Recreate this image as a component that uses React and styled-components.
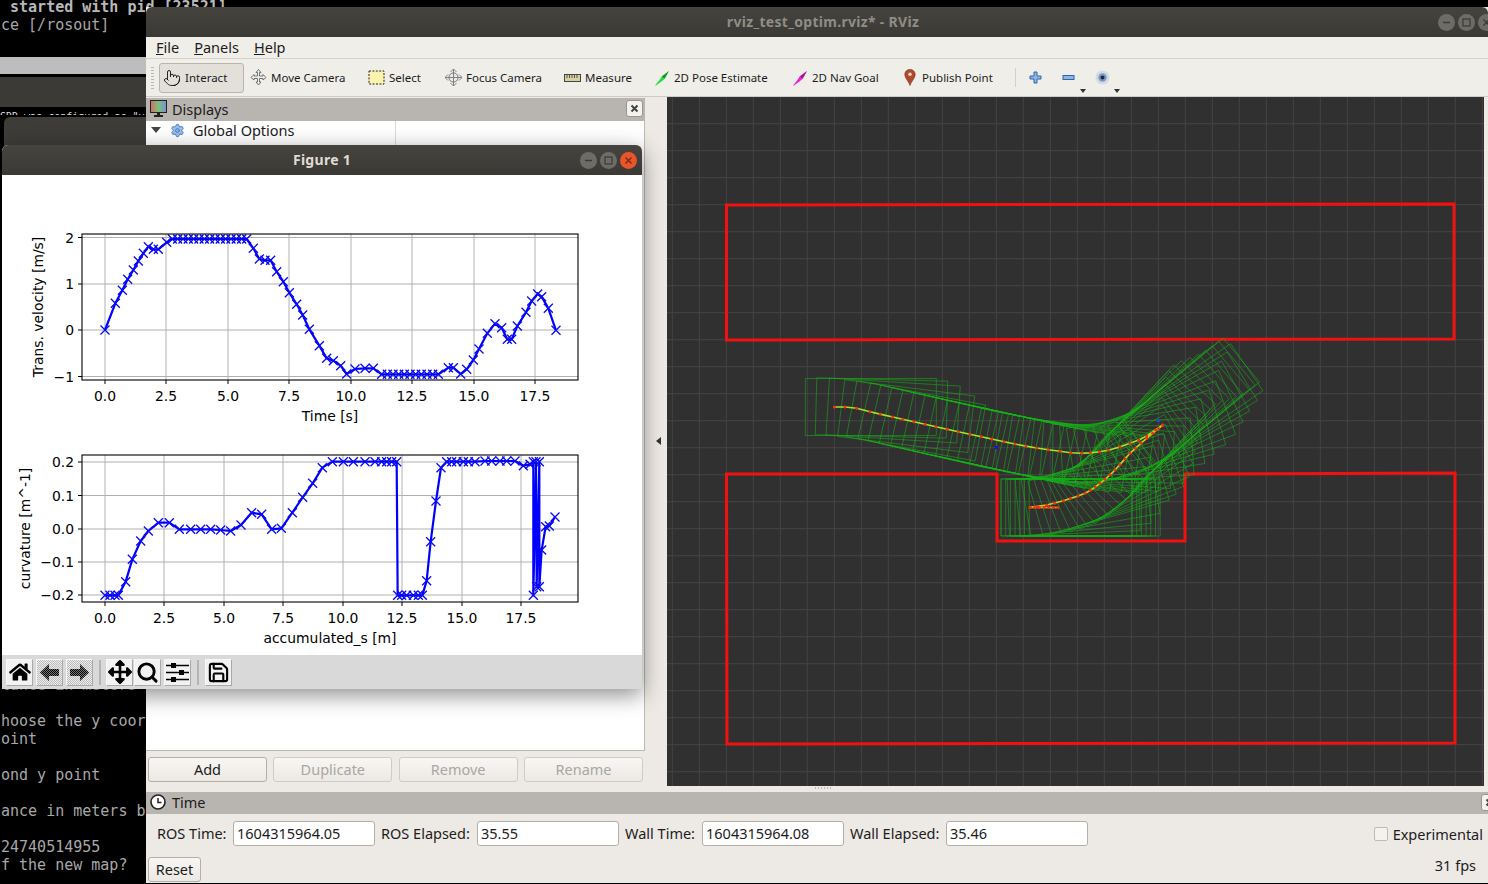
import React from 'react';
import styled, { createGlobalStyle } from 'styled-components';
import { Pointer, Settings, Search, Save } from 'lucide-react';
import { FaHome, FaArrowsAlt } from 'react-icons/fa';

const UI_FONT = '"Noto Sans", "Open Sans", sans-serif';
const PLOT_FONT = '"DejaVu Sans", sans-serif';

const GlobalStyle = createGlobalStyle`
  html, body { margin: 0; padding: 0; background: #000; }
  body { width: 1488px; height: 884px; overflow: hidden; font-family: ${UI_FONT}; }
  * { box-sizing: border-box; }
`;

const Desktop = styled.div`
  position: relative;
  width: 1488px;
  height: 884px;
  background: #000;
  overflow: hidden;
`;

/* terminal showing behind the windows */
const Terminal = styled.div`
  width: 146px;
  height: 884px;
  display: flex;
  flex-direction: column;
  font-family: "DejaVu Sans Mono", monospace;
  font-size: 15px;
  line-height: 18px;
  color: #a8a8a8;
  white-space: pre;
`;
const TermTop = styled.div`
  height: 59px;
  margin-top: -2px;
  padding-left: 1px;
  flex: none;
  b { color: #b8b8b8; }
`;
const TermTab = styled.div`
  height: 17px;
  flex: none;
  background: #bdbdbd;
`;
const TermTitle = styled.div`
  height: 30px;
  flex: none;
  margin-top: 3px;
  background: #3b3a36;
`;
const TermClip = styled.div`
  height: 4px;
  margin-top: 4px;
  flex: none;
  overflow: hidden;
  font-size: 10px;
  line-height: 12px;
  color: #ddd;
`;
const TermBottom = styled.div`
  margin-top: auto;
  height: 208px;
  padding-left: 1px;
  flex: none;
`;

const BackWindow = styled.div`
  position: absolute;
  left: 4px;
  top: 117px;
  width: 200px;
  height: 60px;
  background: #3d3c38;
  border-radius: 6px 6px 0 0;
`;

/* shared window chrome */
const TitleBar = styled.div`
  position: relative;
  flex: none;
  height: ${({ $h }) => $h}px;
  display: flex;
  align-items: center;
  justify-content: center;
  padding: 0 0 2px ${({ $shift }) => $shift || 0}px;
  background: linear-gradient(#45443f, #3a3935);
  color: ${({ $active }) => ($active ? '#e0dcd3' : '#8f8d85')};
  font-size: 14px;
  font-weight: 700;
  letter-spacing: 0.3px;
  border-radius: 6px 6px 0 0;
`;
const WinButtons = styled.div`
  position: absolute;
  top: 0;
  bottom: 0;
  right: ${({ $right }) => $right}px;
  display: flex;
  align-items: center;
  gap: ${({ $gap }) => $gap}px;
`;
const WinButton = styled.span`
  width: 17px;
  height: 17px;
  border-radius: 50%;
  background: ${({ $close }) => ($close ? '#e8542b' : '#6d6c66')};
  color: ${({ $close }) => ($close ? '#7a2a12' : '#3b3a36')};
  display: flex;
  align-items: center;
  justify-content: center;
`;

/* RViz window */
const RvizWindow = styled.div`
  position: absolute;
  left: 146px;
  top: 7px;
  right: 0;
  bottom: 1px;
  display: flex;
  flex-direction: column;
  background: #edeae5;
  color: #1c1c1c;
`;
const MenuBar = styled.div`
  flex: none;
  height: 22px;
  display: flex;
  align-items: center;
  gap: 15px;
  padding: 0 0 2px 10px;
  font-size: 14.5px;
  background: #f0eee9;
  border-bottom: 1px solid #d6d2cb;
`;
const ToolBar = styled.div`
  position: relative;
  flex: none;
  height: 38px;
  display: flex;
  align-items: center;
  padding-left: 13px;
  font-size: 11.5px;
  background: #f0eee9;
  border-bottom: 1px solid #cfcbc4;
`;
const Grip = styled.span`
  position: absolute;
  left: 5px;
  top: 8px;
  width: 3px;
  height: 22px;
  background: repeating-linear-gradient(#bcb8b1 0 1px, transparent 1px 3px);
`;
const Tool = styled.div`
  width: ${({ $w }) => $w}px;
  height: 30px;
  flex: none;
  display: flex;
  align-items: center;
  gap: ${({ $gap }) => $gap ?? 4}px;
  padding: 0 0 0 4px;
  white-space: nowrap;
`;
const ActiveTool = styled(Tool)`
  width: 85px;
  margin-right: 2px;
  background: #e3e0da;
  border: 1px solid #b9b5ae;
  border-radius: 3px;
  padding-left: 3px;
`;
const ToolSep = styled.span`
  width: 1px;
  height: 19px;
  flex: none;
  background: #d4d0c9;
  margin: 0 13px 0 4px;
`;
const SmallTool = styled.div`
  position: relative;
  width: 33px;
  height: 30px;
  flex: none;
  display: flex;
  align-items: center;
`;
const DropMark = styled.span`
  position: absolute;
  right: ${({ $r }) => $r}px;
  bottom: 0;
  border: 3px solid transparent;
  border-top: 4px solid #333;
  border-bottom: 0;
`;
const MainRow = styled.div`
  flex: 1;
  min-height: 0;
  display: flex;
`;
const Dock = styled.div`
  width: 499px;
  flex: none;
  display: flex;
  flex-direction: column;
`;
const PanelHeader = styled.div`
  position: relative;
  flex: none;
  height: ${({ $h }) => $h}px;
  margin-top: ${({ $mt }) => $mt || 0}px;
  display: flex;
  align-items: center;
  gap: ${({ $gap }) => $gap ?? 5}px;
  padding: 0 0 2px 4px;
  font-size: 14.5px;
  background: #b8b4af;
`;
const CloseBox = styled.span`
  position: absolute;
  right: ${({ $r }) => $r}px;
  top: 2px;
  width: 17px;
  height: 17px;
  display: flex;
  align-items: center;
  justify-content: center;
  background: #f4f2ef;
  border: 1px solid #99958f;
  border-radius: 3px;
  color: #444;
`;
const Tree = styled.div`
  flex: 1;
  background: #fff;
  border-right: 1px solid #bdb9b3;
  border-bottom: 1px solid #bdb9b3;
`;
const TreeRow = styled.div`
  height: 20px;
  display: grid;
  grid-template-columns: 250px 1fr;
  font-size: 14.5px;
  line-height: 18px;
`;
const TreeName = styled.div`
  display: flex;
  align-items: center;
  gap: 8px;
  padding: 0 0 2px ${({ $indent }) => $indent}px;
  border-right: 1px solid #dcdad6;
`;
const TreeValue = styled.div`
  padding-left: 4px;
`;
const Expander = styled.span`
  border: 5px solid transparent;
  border-top: 6px solid #444;
  border-bottom: 0;
  margin-right: 1px;
`;
const DockButtons = styled.div`
  flex: none;
  display: grid;
  grid-template-columns: repeat(4, 119px);
  justify-content: space-between;
  padding: 6px 2px 10px 2px;
`;
const PushButton = styled.div`
  height: 25px;
  width: ${({ $w }) => ($w ? `${$w}px` : 'auto')};
  display: flex;
  align-items: center;
  justify-content: center;
  padding-bottom: 2px;
  font-size: 14.5px;
  color: ${({ disabled }) => (disabled ? '#a9a7a2' : '#1c1c1c')};
  background: linear-gradient(#f7f6f4, #ecE9e4);
  border: 1px solid ${({ disabled }) => (disabled ? '#cfccc6' : '#b3afa8')};
  border-radius: 3px;
`;
const Splitter = styled.div`
  width: 22px;
  flex: none;
  display: flex;
  align-items: center;
  justify-content: center;
  padding-bottom: 8px;
`;
const LeftArrow = styled.span`
  border: 4px solid transparent;
  border-right: 5px solid #333;
  border-left: 0;
  margin-left: 5px;
`;
const RenderColumn = styled.div`
  width: 817px;
  flex: none;
  display: flex;
  flex-direction: column;
`;
const RenderView = styled.div`
  height: 689px;
  flex: none;
  background: #303030;
  svg { display: block; }
`;
const SplitDots = styled.span`
  width: 18px;
  height: 2px;
  margin: 1px 0 0 148px;
  background: repeating-linear-gradient(90deg, #bdb9b3 0 1px, transparent 1px 3px);
`;
const TimeRow = styled.div`
  flex: none;
  height: 43px;
  display: flex;
  align-items: flex-start;
  padding: 7px 5px 0 11px;
  font-size: 14.5px;
`;
const FieldLabel = styled.span`
  width: ${({ $w }) => $w}px;
  flex: none;
  line-height: 25px;
  white-space: nowrap;
`;
const Field = styled.div`
  width: 142px;
  height: 25px;
  flex: none;
  margin-right: 6px;
  padding-left: 3px;
  line-height: 23px;
  background: #fff;
  border: 1px solid #b3afa8;
  border-radius: 3px;
`;
const Experimental = styled.label`
  margin-left: auto;
  display: flex;
  align-items: center;
  gap: 5px;
  height: 25px;
`;
const CheckBox = styled.span`
  width: 14px;
  height: 14px;
  background: #f4f2ef;
  border: 1px solid #bdb9b3;
  border-radius: 2px;
`;
const StatusRow = styled.div`
  flex: none;
  height: 26px;
  display: flex;
  align-items: flex-start;
  justify-content: space-between;
  padding: 0 12px 0 2px;
  font-size: 14.5px;
`;
const Fps = styled.span`
  line-height: 16px;
`;

/* matplotlib figure window */
const FigureWindow = styled.div`
  position: absolute;
  left: 2px;
  top: 145px;
  width: 640px;
  height: 544px;
  display: flex;
  flex-direction: column;
  background: #fff;
  box-shadow: 0 6px 22px rgba(0, 0, 0, 0.45);
  border-radius: 6px 6px 0 0;
`;
const Canvas = styled.div`
  flex: none;
  height: 480px;
  svg { display: block; }
`;
const NavBar = styled.div`
  flex: 1;
  display: flex;
  align-items: center;
  padding-left: 4px;
  background: #d9d9d9;
`;
const NavButton = styled.div`
  width: 27px;
  height: 27px;
  flex: none;
  margin-right: ${({ $mr }) => $mr ?? 3}px;
  display: flex;
  align-items: center;
  justify-content: center;
  color: #000;
  background: ${({ $off }) =>
    $off ? 'repeating-conic-gradient(#bdbdbd 0 25%, #ececec 0 50%) 0 0 / 2px 2px' : '#f2f2f2'};
  border: 1px solid;
  border-color: #f8f8f8 #a9a9a9 #a9a9a9 #f8f8f8;
`;
const NavSep = styled.span`
  width: 2px;
  height: 25px;
  flex: none;
  background: #b5b5b5;
  margin: 0 ${({ $r }) => $r}px 0 6px;
`;

/* plot data, read off the reference at 3x (offset by crop origin) */
const flat = (from, to, step, y) => {
  const out = [];
  for (let x = from; x <= to; x += step) out.push([x, y]);
  return out;
};
const velocityRaw = [
  [75, 315], [106, 235], [127, 196], [143, 163], [160, 135], [175, 108], [190, 85], [205, 65], [220, 73], [235, 73], [260, 52],
  ...flat(277, 485, 16, 42), [500, 42],
  [520, 70], [538, 102], [555, 106], [572, 106], [590, 140], [610, 170], [628, 203], [650, 238], [668, 270], [688, 313],
  [718, 362], [740, 400], [760, 407], [782, 422], [800, 447], [825, 432], [855, 430], [880, 430],
  ...flat(905, 1075, 17, 448),
  [1105, 428], [1120, 428], [1142, 447], [1160, 433], [1180, 405], [1197, 372], [1222, 325], [1245, 296], [1265, 308],
  [1282, 343], [1295, 343], [1312, 303], [1338, 262], [1355, 228], [1373, 207], [1385, 215], [1405, 250], [1428, 316],
];
const curvatureRaw = [
  [75, 451], [90, 451], [105, 451], [115, 451], [137, 410], [157, 343], [182, 288], [205, 258], [235, 233], [268, 233],
  [298, 253], [332, 253], [362, 253], [392, 253], [422, 255], [452, 258], [483, 240], [515, 203], [545, 208], [575, 253],
  [604, 250], [637, 203], [668, 157], [698, 115], [727, 68], [757, 50], [790, 50], [820, 50], [855, 50], [885, 50], [905, 50],
  [920, 50], [935, 50], [950, 50], [953, 451], [965, 451], [980, 451], [1000, 451], [1015, 451], [1027, 451], [1040, 407],
  [1052, 290], [1068, 168], [1083, 68], [1100, 50], [1115, 50], [1130, 50], [1150, 50], [1165, 50], [1185, 50], [1215, 48],
  [1235, 48], [1260, 48], [1280, 48], [1305, 48], [1330, 62], [1350, 58], [1360, 50], [1360, 451], [1368, 50], [1370, 425],
  [1378, 50], [1378, 425], [1385, 315], [1397, 245], [1408, 243], [1425, 216],
];
const velocity = velocityRaw.map(([x, y]) => [x / 3 + 80, y / 3 + 225]);
const curvature = curvatureRaw.map(([x, y]) => [x / 3 + 80, y / 3 + 445]);

const GRID = '#b0b0b0';
const xLabels = ['0.0', '2.5', '5.0', '7.5', '10.0', '12.5', '15.0', '17.5'];

function Plot({ top, bottom, xTicks, yTicks, data, xTitle, yTitle, yTitleX }) {
  const left = 82;
  const right = 578;
  const mid = (top + bottom) / 2;
  return (
    <g fontFamily={PLOT_FONT} fontSize="13.9" fill="#000">
      {xTicks.map((x) => (
        <path key={x} d={`M${x} ${top}V${bottom}`} stroke={GRID} strokeWidth="1" />
      ))}
      {yTicks.map(([, y]) => (
        <path key={y} d={`M${left} ${y}H${right}`} stroke={GRID} strokeWidth="1" />
      ))}
      <polyline points={data.map((p) => p.join(',')).join(' ')} fill="none" stroke="#0000ff" strokeWidth="2.2" strokeLinejoin="round" />
      {data.map(([x, y], i) => (
        <path key={i} d={`M${x - 4.5} ${y - 4.5}l9 9M${x - 4.5} ${y + 4.5}l9 -9`} stroke="#0a0af0" strokeWidth="1.3" fill="none" />
      ))}
      <rect x={left} y={top} width={right - left} height={bottom - top} fill="none" stroke="#000" strokeWidth="1.1" />
      {xTicks.map((x, i) => (
        <g key={x}>
          <path d={`M${x} ${bottom}v4`} stroke="#000" strokeWidth="1" />
          <text x={x} y={bottom + 21} textAnchor="middle">{xLabels[i]}</text>
        </g>
      ))}
      {yTicks.map(([label, y]) => (
        <g key={label}>
          <path d={`M${left} ${y}h-4`} stroke="#000" strokeWidth="1" />
          <text x={74} y={y + 5} textAnchor="end">{label}</text>
        </g>
      ))}
      <text x="330" y={bottom + 41} textAnchor="middle">{xTitle}</text>
      <text x={yTitleX} y={mid} textAnchor="middle" transform={`rotate(-90 ${yTitleX} ${mid})`}>{yTitle}</text>
    </g>
  );
}

/* rviz scene: walls, planned path and robot footprints, in screen coordinates */
const fromCrop = ([x, y]) => [x / 3 + 780, y / 3 + 330];
const forwardPath = [
  [163, 231], [195, 231], [230, 235], [270, 245], [338, 261], [435, 283], [535, 305], [635, 327], [705, 342], [770, 354], [840, 364],
  [905, 370], [985, 361], [1050, 340], [1100, 318], [1148, 285],
].map(fromCrop);
const reversePath = [
  [1148, 285], [1100, 325], [1050, 370], [1005, 420], [960, 460], [915, 490], [850, 512], [800, 525], [750, 532],
].map(fromCrop);
const tailPoses = Array.from({ length: 7 }, (_, i) => [1030 + i * 4.7, 507.5]);

function resample(pts, spacing) {
  const out = [];
  for (let i = 0; i < pts.length - 1; i++) {
    const p0 = pts[Math.max(i - 1, 0)];
    const p1 = pts[i];
    const p2 = pts[i + 1];
    const p3 = pts[Math.min(i + 2, pts.length - 1)];
    const n = Math.max(1, Math.round(Math.hypot(p2[0] - p1[0], p2[1] - p1[1]) / spacing));
    for (let k = 0; k < n; k++) {
      const t = k / n;
      const f = (a, b, c, d) =>
        0.5 * (2 * b + (c - a) * t + (2 * a - 5 * b + 4 * c - d) * t * t + (3 * b - a - 3 * c + d) * t * t * t);
      out.push([f(p0[0], p1[0], p2[0], p3[0]), f(p0[1], p1[1], p2[1], p3[1])]);
    }
  }
  out.push(pts[pts.length - 1]);
  return out;
}

function footprint(p, th) {
  const c = Math.cos(th);
  const s = Math.sin(th);
  const corner = (u, v) => `${(p[0] + u * c - v * s).toFixed(1)},${(p[1] + u * s + v * c).toFixed(1)}`;
  return [corner(-29, -28.5), corner(102, -28.5), corner(102, 28.5), corner(-29, 28.5)].join(' ');
}

function footprints(path, reversed) {
  const n = path.length;
  return path.map((p, i) => {
    const a = path[Math.max(i - 2, 0)];
    const b = path[Math.min(i + 2, n - 1)];
    // the robot backs down the second leg, so its nose points against the travel
    const th = reversed ? Math.atan2(a[1] - b[1], a[0] - b[0]) : Math.atan2(b[1] - a[1], b[0] - a[0]);
    // both ends of the trip sit flat: the start pose and the parking box
    const flatten = reversed ? Math.max(0, (i - (n - 5)) / 4) : Math.max(0, (5 - i) / 5);
    return footprint(p, th * (1 - flatten));
  });
}

const forwardPoses = resample(forwardPath, 10);
const reversePoses = resample(reversePath, 7);
const footprintPolys = [
  ...footprints(forwardPoses, false),
  ...footprints(reversePoses, true),
  ...tailPoses.map((p) => footprint(p, 0)),
];
const gridX = Array.from({ length: 31 }, (_, i) => 672.3 + i * 27);
const gridY = Array.from({ length: 26 }, (_, i) => 96.7 + i * 27);

function Scene() {
  const line = (pts) => pts.map((p) => p.map((v) => v.toFixed(1)).join(',')).join(' ');
  return (
    <svg width="817" height="689" viewBox="667 97 817 689">
      {gridX.map((x) => (
        <path key={x} d={`M${x} 97V786`} stroke="#444" strokeWidth="1" />
      ))}
      {gridY.map((y) => (
        <path key={y} d={`M667 ${y}H1484`} stroke="#444" strokeWidth="1" />
      ))}
      <g fill="none" stroke="#f21010" strokeWidth="3">
        <path d="M726.5 205L1454 204V339L726.5 340Z" />
        <path d="M726.5 474H997V541H1185V474L1455 473V743L727 744Z" />
      </g>
      <g fill="none" stroke="#18b018" strokeWidth="1" strokeOpacity="0.55">
        {footprintPolys.map((pts, i) => (
          <polygon key={i} points={pts} />
        ))}
      </g>
      <polyline points={line(forwardPoses)} fill="none" stroke="#a4e41e" strokeWidth="1.6" />
      <polyline points={line(reversePoses)} fill="none" stroke="#d4c81e" strokeWidth="1.6" />
      <path d="M1030 507.5H1058" stroke="#e8a020" strokeWidth="1.6" />
      {[...forwardPoses, ...reversePoses, ...tailPoses].map((p, i) => (
        <circle key={i} cx={p[0]} cy={p[1]} r="1.5" fill="#f03010" />
      ))}
      <rect x="995" y="446" width="3" height="3" fill="#1414e0" />
      <rect x="1157" y="419" width="3" height="3" fill="#1450c0" />
    </svg>
  );
}

/* window and dock glyphs */
const GlyphMin = () => (
  <svg width="9" height="9" viewBox="0 0 9 9"><path d="M1 4.5h7" stroke="#3b3a36" strokeWidth="1.4" /></svg>
);
const GlyphMax = () => (
  <svg width="9" height="9" viewBox="0 0 9 9"><rect x="1" y="1" width="7" height="7" fill="none" stroke="#3b3a36" strokeWidth="1.2" /></svg>
);
const GlyphClose = () => (
  <svg width="9" height="9" viewBox="0 0 9 9"><path d="M1.5 1.5l6 6M7.5 1.5l-6 6" stroke="currentColor" strokeWidth="1.4" /></svg>
);
const DockClose = () => (
  <svg width="9" height="9" viewBox="0 0 9 9"><path d="M1.5 1.5l6 6M7.5 1.5l-6 6" stroke="currentColor" strokeWidth="2" /></svg>
);
const ClockIcon = () => (
  <svg width="16" height="16" viewBox="0 0 16 16">
    <circle cx="8" cy="8" r="7" fill="#fff" stroke="#222" strokeWidth="1.6" />
    <path d="M8 4v4.5h3.5" fill="none" stroke="#222" strokeWidth="1.5" />
  </svg>
);

/* toolbar icons */
const MoveCameraIcon = () => (
  <svg width="17" height="17" viewBox="0 0 17 17" fill="#eee" stroke="#555" strokeWidth="0.8">
    <path d="M8.5 .5l2.5 3h-1.5v3.5h3.5v-1.5l3 3-3 2.5v-1.5h-3.5v3.5h1.5l-2.5 3-2.5-3h1.5v-3.5h-3.5v1.5l-3-2.5 3-3v1.5h3.5v-3.5h-1.5z" />
  </svg>
);
const SelectIcon = () => (
  <svg width="17" height="15" viewBox="0 0 17 15">
    <rect x="1" y="1" width="15" height="13" fill="#fbf3ad" stroke="#222" strokeDasharray="2 1.4" />
  </svg>
);
const FocusIcon = () => (
  <svg width="17" height="17" viewBox="0 0 17 17" fill="none" stroke="#777">
    <circle cx="8.5" cy="8.5" r="4.6" fill="#e8e8e8" />
    <path d="M8.5 0v17M0 8.5h17M5.5 3l3-3 3 3M5.5 14l3 3 3-3M3 5.5l-3 3 3 3M14 5.5l3 3-3 3" strokeWidth="0.9" />
  </svg>
);
const RulerIcon = () => (
  <svg width="17" height="8" viewBox="0 0 17 8">
    <rect x=".5" y=".5" width="16" height="7" fill="#d9cf9f" stroke="#444" />
    <path d="M3 1v3M5.5 1v3M8 1v3M10.5 1v3M13 1v3" stroke="#555" />
  </svg>
);
const ArrowIcon = ({ color }) => (
  <svg width="16" height="16" viewBox="0 0 16 16">
    <path d="M1 15.5L5.5 10 8 6 15 1 11 8.5 7.5 11.5 2 15.5Z" fill={color} />
    <path d="M15 1L10.5 8.5 8 6.5Z" fill="#222" opacity="0.45" />
  </svg>
);
const PinIcon = () => (
  <svg width="12" height="17" viewBox="0 0 12 17">
    <path d="M6 .5C2.8.5.8 2.8.8 5.6c0 3.6 3.8 6.6 5.2 10.9C7.4 12.2 11.2 9.2 11.2 5.6 11.2 2.8 9.2.5 6 .5Z" fill="#b0492a" stroke="#7a3018" strokeWidth="0.6" />
    <circle cx="6" cy="5.2" r="1.8" fill="#f0d8c8" />
  </svg>
);
const PlusIcon = () => (
  <svg width="13" height="13" viewBox="0 0 13 13">
    <path d="M5 1h3v4h4v3h-4v4h-3v-4h-4v-3h4z" fill="#8fb6e0" stroke="#2f66a8" />
  </svg>
);
const MinusIcon = () => (
  <svg width="13" height="13" viewBox="0 0 13 13">
    <rect x="1" y="4.5" width="11" height="4" fill="#8fb6e0" stroke="#2f66a8" />
  </svg>
);
const EyeIcon = () => (
  <svg width="15" height="15" viewBox="0 0 15 15">
    <circle cx="7.5" cy="7.5" r="7" fill="#d4dae2" />
    <circle cx="7.5" cy="7.5" r="4.2" fill="#7d9ac4" />
    <circle cx="7.5" cy="7.5" r="2" fill="#1a2a48" />
  </svg>
);
const MonitorIcon = () => (
  <svg width="17" height="18" viewBox="0 0 17 18">
    <defs>
      <linearGradient id="screen" x1="0" x2="1">
        <stop offset="0" stopColor="#d86a6a" />
        <stop offset="0.5" stopColor="#7ac27a" />
        <stop offset="1" stopColor="#7a8ed8" />
      </linearGradient>
    </defs>
    <rect x=".5" y=".5" width="16" height="12" fill="url(#screen)" stroke="#222" />
    <path d="M7 13h3v2h3v2H4v-2h3z" fill="#222" />
  </svg>
);

/* matplotlib toolbar icons */
const Dither = ({ id }) => (
  <pattern id={id} width="2" height="2" patternUnits="userSpaceOnUse">
    <rect width="2" height="2" fill="#777" />
    <rect width="1" height="1" fill="#000" />
    <rect x="1" y="1" width="1" height="1" fill="#000" />
  </pattern>
);
const BackIcon = () => (
  <svg width="21" height="19" viewBox="0 0 21 19">
    <defs><Dither id="ditherL" /></defs>
    <path d="M1 9.5L10 1v5h10v7H10v5z" fill="url(#ditherL)" />
  </svg>
);
const ForwardIcon = () => (
  <svg width="21" height="19" viewBox="0 0 21 19">
    <defs><Dither id="ditherR" /></defs>
    <path d="M20 9.5L11 1v5H1v7h10v5z" fill="url(#ditherR)" />
  </svg>
);
const SlidersIcon = () => (
  <svg width="23" height="21" viewBox="0 0 23 21" stroke="#000" fill="#000">
    <path d="M0 3.5h23M0 10.5h23M0 17.5h23" strokeWidth="1.6" />
    <rect x="5" y="1" width="5" height="5" stroke="none" />
    <rect x="13" y="8" width="5" height="5" stroke="none" />
    <rect x="5" y="15" width="5" height="5" stroke="none" />
  </svg>
);

const tools = [
  { label: 'Move Camera', w: 118, icon: <MoveCameraIcon /> },
  { label: 'Select', w: 77, icon: <SelectIcon /> },
  { label: 'Focus Camera', w: 119, icon: <FocusIcon /> },
  { label: 'Measure', w: 90, icon: <RulerIcon /> },
  { label: '2D Pose Estimate', w: 138, icon: <ArrowIcon color="#22e03a" /> },
  { label: '2D Nav Goal', w: 112, icon: <ArrowIcon color="#f020d8" /> },
  { label: 'Publish Point', w: 111, gap: 6, icon: <PinIcon /> },
];

const timeFields = [
  { label: 'ROS Time:', w: 76, value: '1604315964.05' },
  { label: 'ROS Elapsed:', w: 96, value: '35.55' },
  { label: 'Wall Time:', w: 77, value: '1604315964.08' },
  { label: 'Wall Elapsed:', w: 96, value: '35.46' },
];

export default function App() {
  return (
    <Desktop>
      <GlobalStyle />
      <Terminal>
        <TermTop>
          <b>{' started with pid [23521]'}</b>
          {'\nce [/rosout]'}
        </TermTop>
        <TermTab />
        <TermTitle />
        <TermClip>{'SDD was configured as "v4l2"'}</TermClip>
        <TermBottom>
          {'tance in meters\n\nhoose the y coor\noint\n\nond y point\n\nance in meters b\n\n24740514955\nf the new map?'}
        </TermBottom>
      </Terminal>
      <BackWindow />

      <RvizWindow>
        <TitleBar $h={30} $shift={12}>
          rviz_test_optim.rviz* - RViz
          <WinButtons $right={-7} $gap={3}>
            <WinButton><GlyphMin /></WinButton>
            <WinButton><GlyphMax /></WinButton>
            <WinButton><GlyphClose /></WinButton>
          </WinButtons>
        </TitleBar>
        <MenuBar>
          <span><u>F</u>ile</span>
          <span><u>P</u>anels</span>
          <span><u>H</u>elp</span>
        </MenuBar>
        <ToolBar>
          <Grip />
          <ActiveTool>
            <Pointer size={18} strokeWidth={1.2} color="#111" />
            Interact
          </ActiveTool>
          {tools.map((t) => (
            <Tool key={t.label} $w={t.w} $gap={t.gap}>
              {t.icon}
              {t.label}
            </Tool>
          ))}
          <ToolSep />
          <SmallTool><PlusIcon /></SmallTool>
          <SmallTool><MinusIcon /><DropMark $r={9} /></SmallTool>
          <SmallTool><EyeIcon /><DropMark $r={8} /></SmallTool>
        </ToolBar>
        <MainRow>
          <Dock>
            <PanelHeader $h={23} $mt={1}>
              <MonitorIcon />
              Displays
              <CloseBox $r={2}><DockClose /></CloseBox>
            </PanelHeader>
            <Tree>
              <TreeRow>
                <TreeName $indent={5}>
                  <Expander />
                  <Settings size={15} color="#3b74c4" fill="#9fc0ea" strokeWidth={1.5} />
                  Global Options
                </TreeName>
                <TreeValue />
              </TreeRow>
              <TreeRow>
                <TreeName $indent={46}>Fixed Frame</TreeName>
                <TreeValue>odom</TreeValue>
              </TreeRow>
            </Tree>
            <DockButtons>
              <PushButton>Add</PushButton>
              <PushButton disabled>Duplicate</PushButton>
              <PushButton disabled>Remove</PushButton>
              <PushButton disabled>Rename</PushButton>
            </DockButtons>
          </Dock>
          <Splitter><LeftArrow /></Splitter>
          <RenderColumn>
            <RenderView><Scene /></RenderView>
            <SplitDots />
          </RenderColumn>
        </MainRow>
        <PanelHeader $h={22} $gap={6}>
          <ClockIcon />
          <span>Time</span>
          <CloseBox $r={-10}><DockClose /></CloseBox>
        </PanelHeader>
        <TimeRow>
          {timeFields.map((f) => (
            <React.Fragment key={f.label}>
              <FieldLabel $w={f.w}>{f.label}</FieldLabel>
              <Field>{f.value}</Field>
            </React.Fragment>
          ))}
          <Experimental>
            <CheckBox />
            Experimental
          </Experimental>
        </TimeRow>
        <StatusRow>
          <PushButton $w={53}>Reset</PushButton>
          <Fps>31 fps</Fps>
        </StatusRow>
      </RvizWindow>

      <FigureWindow>
        <TitleBar $h={30} $active>
          Figure 1
          <WinButtons $right={5} $gap={3}>
            <WinButton><GlyphMin /></WinButton>
            <WinButton><GlyphMax /></WinButton>
            <WinButton $close><GlyphClose /></WinButton>
          </WinButtons>
        </TitleBar>
        <Canvas>
          <svg width="640" height="480" viewBox="2 175 640 480">
            <Plot
              top={234}
              bottom={380}
              xTicks={[105, 166, 228, 289, 351, 412, 474, 535]}
              yTicks={[['2', 237.5], ['1', 284], ['0', 330], ['−1', 376.5]]}
              data={velocity}
              xTitle="Time [s]"
              yTitle="Trans. velocity [m/s]"
              yTitleX={43}
            />
            <Plot
              top={455}
              bottom={602}
              xTicks={[105, 164, 224, 283, 343, 402, 462, 521]}
              yTicks={[['0.2', 462], ['0.1', 495.5], ['0.0', 529], ['−0.1', 562], ['−0.2', 595]]}
              data={curvature}
              xTitle="accumulated_s [m]"
              yTitle="curvature [m^-1]"
              yTitleX={30}
            />
          </svg>
        </Canvas>
        <NavBar>
          <NavButton><FaHome size={22} /></NavButton>
          <NavButton $off><BackIcon /></NavButton>
          <NavButton $off $mr={0}><ForwardIcon /></NavButton>
          <NavSep $r={5} />
          <NavButton $mr={1}><FaArrowsAlt size={24} /></NavButton>
          <NavButton $mr={3}><Search size={23} strokeWidth={3} /></NavButton>
          <NavButton $mr={0}><SlidersIcon /></NavButton>
          <NavSep $r={6} />
          <NavButton><Save size={23} strokeWidth={2.2} /></NavButton>
        </NavBar>
      </FigureWindow>
    </Desktop>
  );
}
